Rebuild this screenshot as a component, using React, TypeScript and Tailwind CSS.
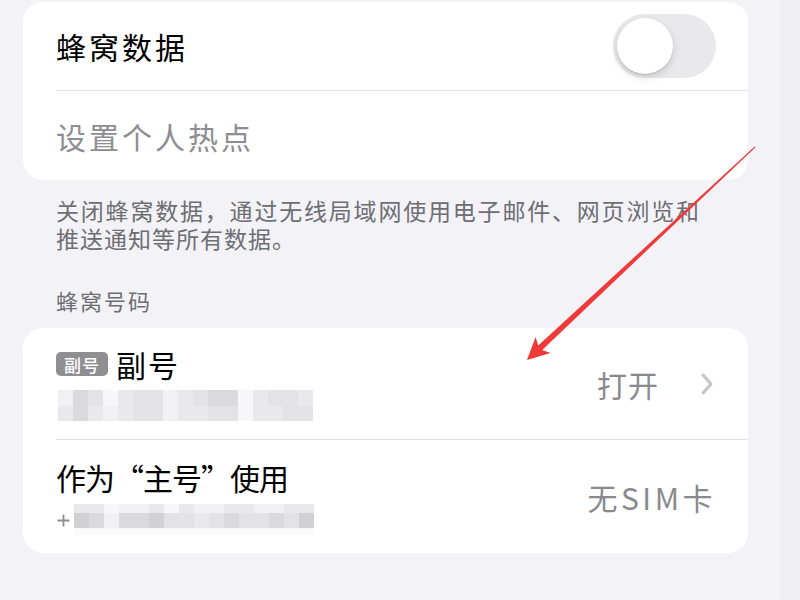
import React from "react";

const shade: Record<string, string> = {
  f: "bg-[#f7f7f9]",
  a: "bg-[#f1f1f3]",
  b: "bg-[#e9e9eb]",
  c: "bg-[#e3e3e5]",
  d: "bg-[#dadadc]",
  e: "bg-[#d1d1d4]",
  w: "bg-[#fafafb]",
};

function BlockRow({ pattern, h }: { pattern: string; h: string }) {
  return (
    <div className={`flex ${h}`}>
      {pattern.split("").map((k, i) => (
        <div key={i} className={`w-[15px] h-full ${shade[k]}`} />
      ))}
    </div>
  );
}

function Toggle() {
  return (
    <div className="w-[103px] h-[64px] rounded-full bg-[#e9e9eb] p-[4px] flex items-center">
      <div className="w-[56px] h-[56px] rounded-full bg-white shadow-[0_3px_8px_rgba(0,0,0,0.15),0_1px_1px_rgba(0,0,0,0.12)]" />
    </div>
  );
}

function Chevron() {
  return (
    <svg width="14" height="22" viewBox="0 0 14 22" fill="none">
      <path d="M3 2 L11 11 L3 20" stroke="#c4c4c7" strokeWidth="3" strokeLinecap="round" strokeLinejoin="round" />
    </svg>
  );
}

function Plus() {
  return (
    <svg width="13" height="13" viewBox="0 0 13 13">
      <path d="M6.5 0.5 V12.5 M0.5 6.5 H12.5" stroke="#8e8e93" strokeWidth="1.8" />
    </svg>
  );
}

export default function App() {
  return (
    <div className="relative w-[800px] h-[600px] overflow-hidden flex bg-[#f2f2f7] font-['Noto_Sans_CJK_SC','Noto_Sans',sans-serif]">
      <div className="w-[780px] h-full pl-[23px] pr-[32px] pt-[2px]">
        {/* Card 1 */}
        <div className="bg-white rounded-[20px] w-[725px]">
          <div className="h-[88px] flex items-center justify-between pl-[33px] pr-[32px]">
            <span className="text-[30px] tracking-[3px] text-black leading-none">蜂窝数据</span>
            <Toggle />
          </div>
          <div className="ml-[33px] h-[1px] bg-[#e2e2e6]" />
          <div className="h-[89px] flex items-center pl-[33px]">
            <span className="text-[30px] tracking-[3px] text-[#8e8e92] leading-none">设置个人热点</span>
          </div>
        </div>

        {/* Footer */}
        <div className="mt-[16px] pl-[33px] text-[23px] leading-[28px] text-[#6e6e73]">
          <div className="tracking-[1.8px] whitespace-nowrap">关闭蜂窝数据，通过无线局域网使用电子邮件、网页浏览和</div>
          <div className="tracking-[1px] whitespace-nowrap">推送通知等所有数据。</div>
        </div>

        {/* Section header */}
        <div className="mt-[34px] pl-[33px] text-[22px] leading-[28px] tracking-[2px] text-[#6e6e73]">蜂窝号码</div>

        {/* Card 2 */}
        <div className="mt-[14px] bg-white rounded-[20px] w-[725px]">
          <div className="h-[111px] flex items-center justify-between pl-[33px] pr-[34px]">
            <div className="flex flex-col">
              <div className="h-[36px] flex items-center">
                <span className="w-[52px] h-[24px] rounded-[5px] bg-[#8e8e93] text-white text-[17px] font-medium leading-none tracking-[1px] flex items-center justify-center">副号</span>
                <span className="ml-[8px] text-[30px] tracking-[2px] text-black leading-none">副号</span>
              </div>
              <div className="mt-[8px] ml-[2px] h-[31px] flex flex-col">
                <BlockRow pattern="adcfbccabcddfbccb" h="h-[16px]" />
                <BlockRow pattern="bdbabccabbccfbbcc" h="h-[15px]" />
              </div>
            </div>
            <div className="flex items-center">
              <span className="text-[30px] tracking-[1px] text-[#8a8a8e] leading-none">打开</span>
              <span className="ml-[41px] flex"><Chevron /></span>
            </div>
          </div>
          <div className="ml-[33px] h-[1px] bg-[#e2e2e6]" />
          <div className="h-[113px] flex items-center justify-between pl-[33px] pr-[32px]">
            <div className="flex flex-col">
              <div className="h-[36px] flex items-center">
                <span className="text-[30px] tracking-[-1px] text-black leading-none">作为“主号”使用</span>
              </div>
              <div className="mt-[9px] h-[31px] flex items-center">
                <span className="ml-[1px] mr-[4px] mt-[2px] flex"><Plus /></span>
                <div className="flex flex-col">
                  <BlockRow pattern="bbfaabfbaabbaabb" h="h-[9px]" />
                  <BlockRow pattern="edaddeccbcdccdce" h="h-[15px]" />
                  <BlockRow pattern="wwwwwwwwwwwwwwww" h="h-[7px]" />
                </div>
              </div>
            </div>
            <span className="text-[30px] tracking-[3.5px] text-[#8a8a8e] leading-none">无SIM卡</span>
          </div>
        </div>
      </div>
      <div className="w-[20px] h-full bg-[#efeff1]" />

      {/* Annotation arrow */}
      <svg className="absolute left-0 top-0 pointer-events-none" width="800" height="600" viewBox="0 0 800 600">
        <polygon
          points="755.3,147.4 542.2,349.9 550.6,353.0 527,360 535.6,337.0 538.2,345.5 754.7,146.6"
          fill="#f03a3a"
        />
      </svg>
    </div>
  );
}
